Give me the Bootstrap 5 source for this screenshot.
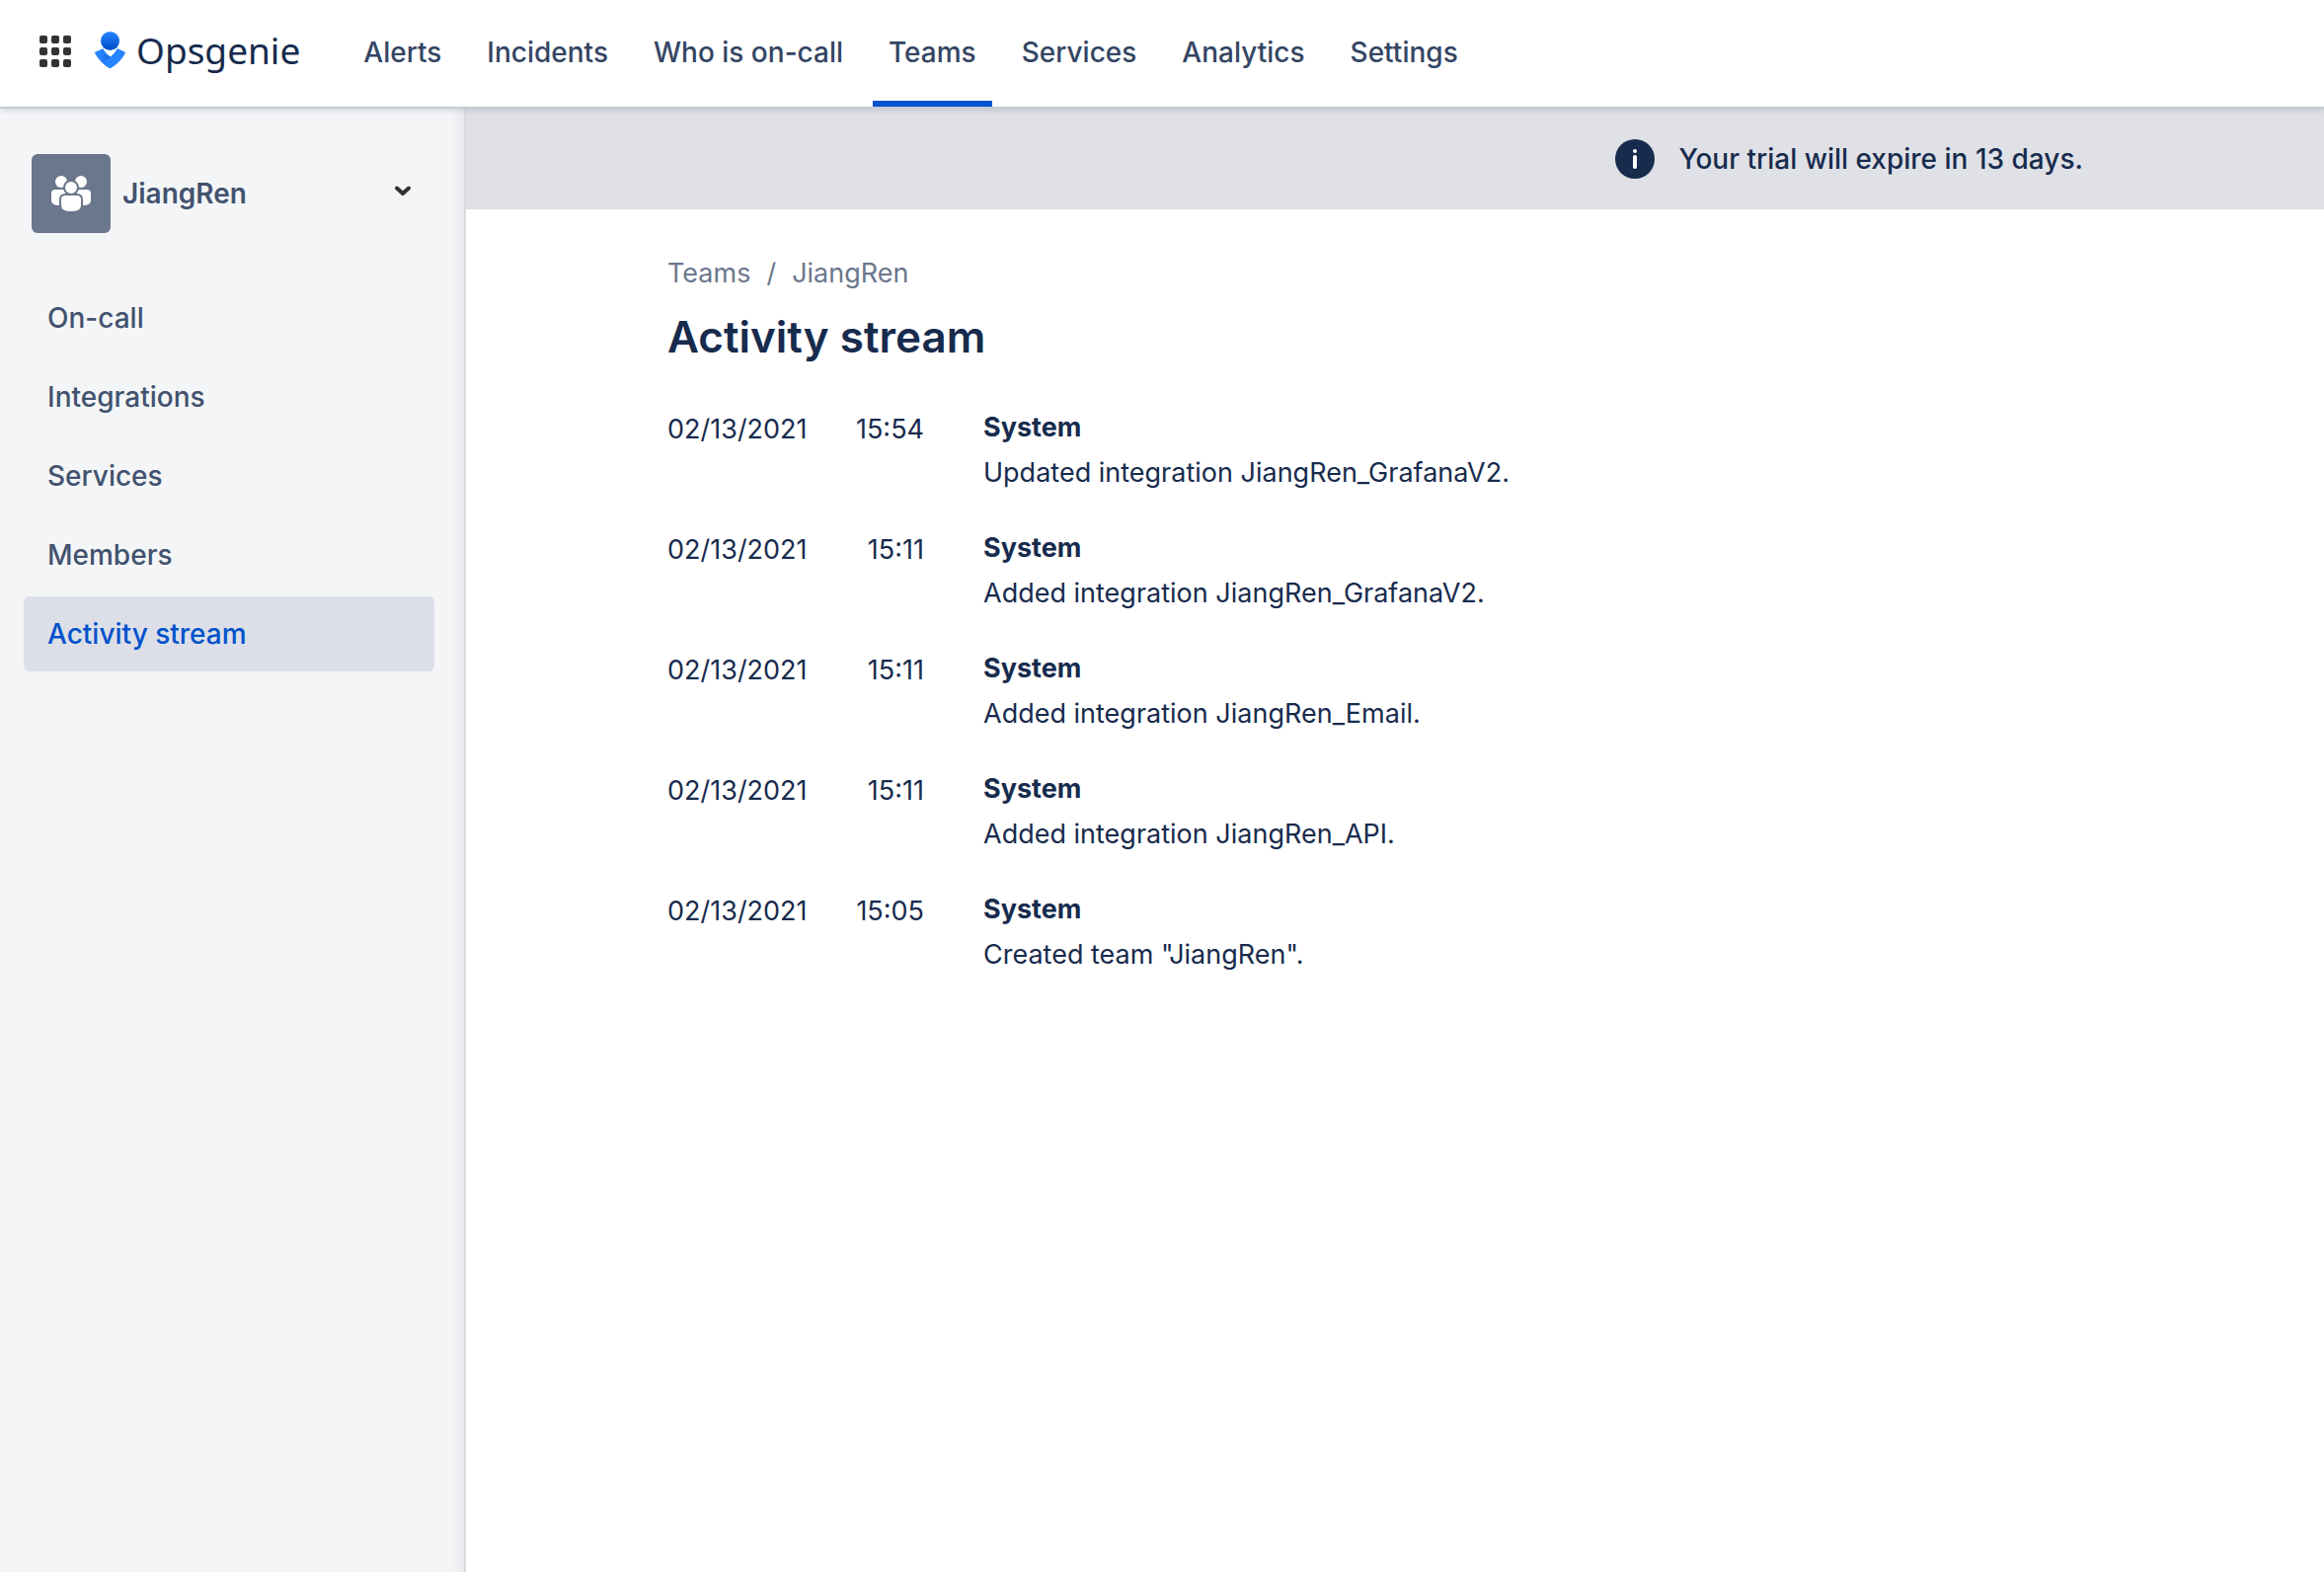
<!DOCTYPE html>
<html lang="en">
<head>
<meta charset="utf-8">
<meta name="viewport" content="width=device-width, initial-scale=1">
<title>Activity stream - JiangRen - Opsgenie</title>
<link href="https://cdn.jsdelivr.net/npm/bootstrap@5.3.0/dist/css/bootstrap.min.css" rel="stylesheet">
<style>
  body { font-family: Inter, "Liberation Sans", sans-serif; font-size: 27px; line-height: 46px; color: #172b4d; background: #fff; }
  a { text-decoration: none; }
  svg { display: block; flex: none; }
  .topbar { height: 110px; padding: 0 40px; border-bottom: 2px solid #c6cbd5; box-shadow: 0 2px 6px rgba(9, 30, 66, .14); z-index: 2; }
  .app-switch { padding: 0 0 4px; }
  .brand { gap: 10px; padding-bottom: 6px; }
  .brand-name { font-family: "Noto Sans", sans-serif; font-size: 37px; line-height: 48px; color: #172b4d; }
  .main-nav { margin-left: 48px; gap: 14px; }
  .main-nav .nav-link { display: flex; align-items: center; padding: 0 16px 3px; font-size: 28px; color: #344563; font-weight: 500; border-bottom: 6px solid transparent; border-top: 6px solid transparent; }
  .main-nav .nav-link.active { border-bottom-color: #0052cc; }
  .side { width: 472px; padding: 46px 30px 0 24px; background: linear-gradient(to left, #e8eaed, #f4f5f7 12px); border-right: 2px solid #d9dadc; }
  .team-switch { padding: 0 24px 0 8px; margin-bottom: 48px; color: #42526e; font-size: 28px; line-height: inherit; font-weight: 600; }
  .team-avatar { width: 80px; height: 80px; border-radius: 6px; background: #6b778c; margin-right: 12px; }
  .side-nav { gap: 4px; }
  .side-nav .nav-link { padding: 15px 24px; border-radius: 6px; font-size: 28px; color: #42526e; font-weight: 500; }
  .side-nav .nav-link.active { background: #dcdfe7; color: #0052cc; }
  .trial { height: 102px; padding-right: 244px; gap: 24px; background: #dfe1e6; font-size: 28px; font-weight: 500; }
  .page-body { padding: 45px 204px; }
  .crumbs { line-height: 40px; margin-bottom: 16px; --bs-breadcrumb-divider-color: #6b778c; --bs-breadcrumb-item-padding-x: 16px; }
  .crumbs a { color: #6b778c; }
  .page-title { font-size: 44px; line-height: 56px; font-weight: 600; margin-bottom: 41px; }
  .stream { gap: 30px; }
  .stamp { width: 260px; padding-top: 2px; margin-right: 60px; }
</style>
<script src="https://cdn.jsdelivr.net/npm/bootstrap@5.3.0/dist/js/bootstrap.bundle.min.js" defer></script>
</head>
<body class="d-flex flex-column min-vh-100">
<header class="topbar d-flex align-items-stretch bg-white position-relative">
  <button type="button" class="app-switch btn border-0 me-4" aria-label="Switch to another product">
    <svg width="32" height="32" viewBox="0 0 32 32" fill="#333">
      <rect width="8" height="8" rx="2"/><rect x="12" width="8" height="8" rx="2"/><rect x="24" width="8" height="8" rx="2"/>
      <rect y="12" width="8" height="8" rx="2"/><rect x="12" y="12" width="8" height="8" rx="2"/><rect x="24" y="12" width="8" height="8" rx="2"/>
      <rect y="24" width="8" height="8" rx="2"/><rect x="12" y="24" width="8" height="8" rx="2"/><rect x="24" y="24" width="8" height="8" rx="2"/>
    </svg>
  </button>
  <a href="#" class="brand d-flex align-items-center">
    <svg width="32" height="38" viewBox="0 0 32 38" aria-hidden="true">
      <defs>
        <linearGradient id="head" x1="0" y1="0" x2="0" y2="1"><stop offset="0" stop-color="#2684ff"/><stop offset=".9" stop-color="#0052cc"/></linearGradient>
        <linearGradient id="arm" x1="0" y1=".3" x2="1" y2=".6"><stop offset=".3" stop-color="#2684ff"/><stop offset="1" stop-color="#0052cc"/></linearGradient>
      </defs>
      <circle cx="15.500" cy="9.500" r="9.500" fill="url(#head)"/>
      <path d="M8.300 17.400 Q7.600 17 7 17.700 L.4 20.800 Q-.3 21.300 .2 22 Q5 31.300 14.800 37 Q18 35.500 21 31 L15.500 25.300 Q11 22 8.300 17.400Z" fill="url(#arm)"/>
      <path d="M22.700 17.400 Q23.400 17 24 17.400 L30.600 20.800 Q31.300 21.300 30.800 22 Q26 31.300 16.200 37 Q15.500 37.400 14.800 37 Q10.500 34.700 6.800 30.600 Q17.500 26.500 22.700 17.400Z" fill="#2684ff"/>
    </svg>
    <span class="brand-name">Opsgenie</span>
  </a>
  <nav class="main-nav nav flex-nowrap" aria-label="Main">
    <a class="nav-link" href="#">Alerts</a>
    <a class="nav-link" href="#">Incidents</a>
    <a class="nav-link" href="#">Who is on-call</a>
    <a class="nav-link active" aria-current="page" href="#">Teams</a>
    <a class="nav-link" href="#">Services</a>
    <a class="nav-link" href="#">Analytics</a>
    <a class="nav-link" href="#">Settings</a>
  </nav>
</header>
<div class="d-flex flex-grow-1">
  <aside class="side flex-shrink-0">
    <button type="button" class="team-switch btn border-0 w-100 d-flex align-items-center">
      <span class="team-avatar d-flex align-items-center justify-content-center">
        <svg width="40" height="36" viewBox="0 0 40 36" fill="#fff" aria-hidden="true">
          <circle cx="10" cy="6" r="6"/><circle cx="30" cy="6" r="6"/>
          <path d="M0 18q0-4 4-4h32q4 0 4 4v7q0 5-8 5H8q-8 0-8-5z"/>
          <g stroke="#6b778c" stroke-width="2"><circle cx="20" cy="12" r="7"/><path d="M9 24q0-5 5-5h12q5 0 5 5v6q0 7-11 7T9 30z"/></g>
        </svg>
      </span>
      <span>JiangRen</span>
      <svg class="ms-auto" width="16" height="16" viewBox="0 0 16 16" fill="none" stroke="#333" stroke-width="4" stroke-linecap="round" stroke-linejoin="round" aria-hidden="true"><path d="M2 2.500 8 8l6-5.500"/></svg>
    </button>
    <nav class="side-nav nav flex-column" aria-label="Team">
      <a class="nav-link" href="#">On-call</a>
      <a class="nav-link" href="#">Integrations</a>
      <a class="nav-link" href="#">Services</a>
      <a class="nav-link" href="#">Members</a>
      <a class="nav-link active" aria-current="page" href="#">Activity stream</a>
    </nav>
  </aside>
  <main class="flex-grow-1">
    <div class="trial d-flex align-items-center justify-content-end" role="status">
      <svg width="40" height="40" viewBox="0 0 40 40" aria-hidden="true"><circle cx="20" cy="20" r="20" fill="#172b4d"/><circle cx="20" cy="12" r="2" fill="#fff"/><path d="M20 18v10" stroke="#fff" stroke-width="4" stroke-linecap="round"/></svg>
      <span>Your trial will expire in 13 days.</span>
    </div>
    <div class="page-body">
      <nav aria-label="Breadcrumb">
        <ol class="crumbs breadcrumb">
          <li class="breadcrumb-item"><a href="#">Teams</a></li>
          <li class="breadcrumb-item"><a href="#">JiangRen</a></li>
        </ol>
      </nav>
      <h1 class="page-title">Activity stream</h1>
      <ul class="stream list-unstyled d-flex flex-column mb-0">
        <li class="d-flex">
          <div class="stamp d-flex justify-content-between"><span>02/13/2021</span><span>15:54</span></div>
          <div><div class="fw-bold">System</div><div>Updated integration JiangRen_GrafanaV2.</div></div>
        </li>
        <li class="d-flex">
          <div class="stamp d-flex justify-content-between"><span>02/13/2021</span><span>15:11</span></div>
          <div><div class="fw-bold">System</div><div>Added integration JiangRen_GrafanaV2.</div></div>
        </li>
        <li class="d-flex">
          <div class="stamp d-flex justify-content-between"><span>02/13/2021</span><span>15:11</span></div>
          <div><div class="fw-bold">System</div><div>Added integration JiangRen_Email.</div></div>
        </li>
        <li class="d-flex">
          <div class="stamp d-flex justify-content-between"><span>02/13/2021</span><span>15:11</span></div>
          <div><div class="fw-bold">System</div><div>Added integration JiangRen_API.</div></div>
        </li>
        <li class="d-flex">
          <div class="stamp d-flex justify-content-between"><span>02/13/2021</span><span>15:05</span></div>
          <div><div class="fw-bold">System</div><div>Created team "JiangRen".</div></div>
        </li>
      </ul>
    </div>
  </main>
</div>
</body>
</html>
